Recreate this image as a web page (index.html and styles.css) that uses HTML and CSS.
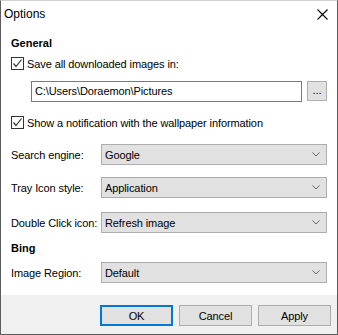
FILE: index.html
```html
<!DOCTYPE html>
<html lang="en">
<head>
  <meta charset="UTF-8">
  <title>Options</title>
  <link rel="stylesheet" href="styles.css">
</head>
<body>
  <div class="window">
    <div class="titlebar">
      <span class="title">Options</span>
      <svg class="close" width="11" height="11" viewBox="0 0 11 11">
        <path d="M0.5 0.5 L10.5 10.5 M10.5 0.5 L0.5 10.5" stroke="#000" stroke-width="1.1" fill="none"/>
      </svg>
    </div>

    <div class="content">
      <div class="heading">General</div>

      <label class="check-row first">
        <span class="checkbox"><svg width="11" height="11" viewBox="0 0 11 11"><path d="M1.5 5.5 L4 8.5 L9.5 1.5" stroke="#333" stroke-width="1.2" fill="none"/></svg></span>
        Save all downloaded images in:
      </label>

      <div class="path-row">
        <div class="textbox">C:\Users\Doraemon\Pictures</div>
        <div class="browse">...</div>
      </div>

      <label class="check-row second">
        <span class="checkbox"><svg width="11" height="11" viewBox="0 0 11 11"><path d="M1.5 5.5 L4 8.5 L9.5 1.5" stroke="#333" stroke-width="1.2" fill="none"/></svg></span>
        Show a notification with the wallpaper information
      </label>

      <div class="field row-search">
        <span class="label">Search engine:</span>
        <div class="select"><span>Google</span><svg width="8" height="5" viewBox="0 0 8 5"><path d="M0.5 0.5 L4 4 L7.5 0.5" stroke="#666" fill="none"/></svg></div>
      </div>

      <div class="field row-tray">
        <span class="label">Tray Icon style:</span>
        <div class="select"><span>Application</span><svg width="8" height="5" viewBox="0 0 8 5"><path d="M0.5 0.5 L4 4 L7.5 0.5" stroke="#666" fill="none"/></svg></div>
      </div>

      <div class="field row-dblclick">
        <span class="label">Double Click icon:</span>
        <div class="select"><span>Refresh image</span><svg width="8" height="5" viewBox="0 0 8 5"><path d="M0.5 0.5 L4 4 L7.5 0.5" stroke="#666" fill="none"/></svg></div>
      </div>

      <div class="heading bing">Bing</div>

      <div class="field row-region">
        <span class="label">Image Region:</span>
        <div class="select"><span>Default</span><svg width="8" height="5" viewBox="0 0 8 5"><path d="M0.5 0.5 L4 4 L7.5 0.5" stroke="#666" fill="none"/></svg></div>
      </div>
    </div>

    <div class="footer">
      <button class="btn default">OK</button>
      <button class="btn">Cancel</button>
      <button class="btn">Apply</button>
    </div>
  </div>
</body>
</html>
```

FILE: styles.css
```css
/* Window frame */
body {
  margin: 0;
  font-family: 'Liberation Sans', Arial, sans-serif;
  font-size: 11px;
  letter-spacing: -0.1px;
  color: #000;
  background: #fff;
}

.window {
  width: 338px;
  height: 335px;
  box-sizing: border-box;
  border: 1px solid #5c5c5c;
  border-top-color: #d0d0d0;
  background: #fff;
  display: flex;
  flex-direction: column;
}

.titlebar {
  height: 26px;
  display: flex;
  align-items: center;
  justify-content: space-between;
  padding: 0 9px 0 3px;
}

.title {
  font-size: 12px;
  letter-spacing: 0;
}

.close {
  display: block;
}

/* Form content */
.content {
  padding: 0 10px;
}

.heading {
  font-weight: bold;
  height: 14px;
  line-height: 14px;
  margin-top: 9px;
  letter-spacing: 0;
}

.heading.bing {
  margin-top: 8px;
}

.check-row {
  display: flex;
  align-items: center;
  gap: 3px;
  height: 13px;
}

.check-row.first {
  margin-top: 7px;
}

.check-row.second {
  margin-top: 14px;
}

.checkbox {
  width: 13px;
  height: 13px;
  box-sizing: border-box;
  border: 1px solid #333;
  background: #fff;
  display: flex;
  align-items: center;
  justify-content: center;
}

.path-row {
  display: flex;
  align-items: flex-start;
  gap: 5px;
  margin-top: 11px;
  padding-left: 20px;
}

.textbox {
  width: 272px;
  height: 21px;
  box-sizing: border-box;
  border: 1px solid #7a7a7a;
  padding-left: 3px;
  line-height: 19px;
}

.browse {
  width: 20px;
  height: 20px;
  box-sizing: border-box;
  border: 1px solid #adadad;
  background: #e1e1e1;
  text-align: center;
  line-height: 16px;
}

.field {
  display: flex;
  align-items: center;
  margin-top: 15px;
}

.field.row-tray {
  margin-top: 12px;
}

.field.row-dblclick {
  margin-top: 14px;
}

.field.row-region {
  margin-top: 7px;
}

.label {
  width: 90px;
}

.select {
  width: 226px;
  height: 21px;
  box-sizing: border-box;
  border: 1px solid #adadad;
  background: #e1e1e1;
  display: flex;
  align-items: center;
  justify-content: space-between;
  padding: 0 6px 0 3px;
}

.select svg {
  display: block;
}

/* Button strip */
.footer {
  margin-top: auto;
  height: 39px;
  background: #f0f0f0;
  display: flex;
  justify-content: flex-end;
  align-items: flex-start;
  gap: 6px;
  padding: 10px 6px 0 0;
  box-sizing: border-box;
}

.btn {
  width: 73px;
  height: 21px;
  box-sizing: border-box;
  border: 1px solid #adadad;
  background: #e1e1e1;
  font-family: inherit;
  font-size: 11px;
  letter-spacing: -0.1px;
  color: #000;
  padding: 0;
}

.btn.default {
  border: 2px solid #0078d7;
}
```
